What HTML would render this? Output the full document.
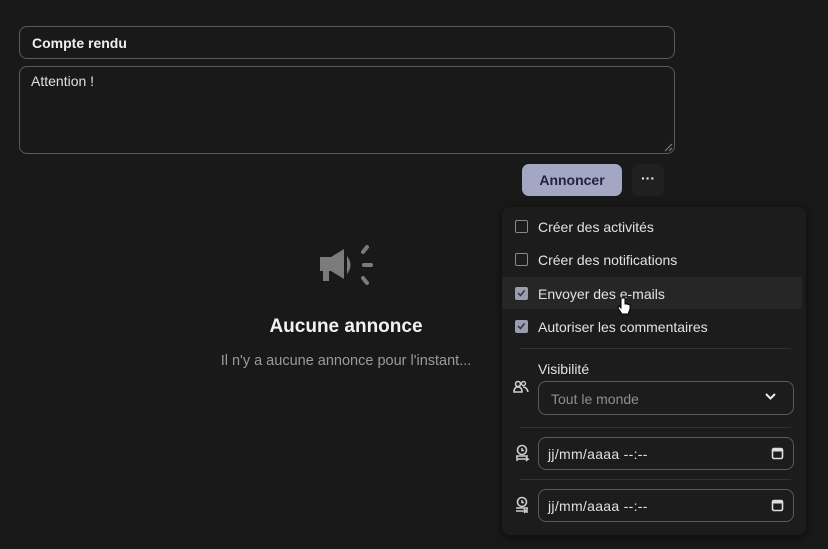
<!DOCTYPE html>
<html><head><style>
body{margin:0;width:828px;height:549px;background:#191919;font-family:"Liberation Sans","DejaVu Sans",sans-serif;color:#e6e6e6;position:relative;overflow:hidden}
.a{position:absolute}
.inp{border:1.5px solid #5a5a5a;border-radius:8px;box-sizing:border-box}
.cb{position:absolute;left:515px;width:13px;height:13px;box-sizing:border-box;border:1.5px solid #8a8a8a;border-radius:2px}
.cb.on{background:#9a9cb0;border-color:#9a9cb0}
.lbl{position:absolute;left:538px;font-size:14px;color:#e2e2e2}
.sep{position:absolute;left:520px;width:271px;height:1px;background:#333}
</style></head><body>
<div class="a inp" style="left:19px;top:26px;width:656px;height:33px"></div>
<div class="a" style="left:32px;top:35px;font-size:14px;font-weight:bold;color:#f0f0f0">Compte rendu</div>
<div class="a inp" style="left:19px;top:66px;width:656px;height:88px"></div>
<div class="a" style="left:31px;top:73px;font-size:14px;color:#e0e0e0">Attention !</div>
<svg class="a" style="left:664px;top:143px" width="9" height="9"><path d="M1 8L8 1M5 8L8 5" stroke="#888" stroke-width="1"/></svg>
<div class="a" style="left:522px;top:164px;width:100px;height:32px;background:#a4a7c3;border-radius:7px;color:#22243a;font-weight:bold;font-size:14px;text-align:center;line-height:32px">Annoncer</div>
<div class="a" style="left:632px;top:164px;width:32px;height:32px;background:#202020;border-radius:7px;color:#eee;font-weight:bold;text-align:center;line-height:28px;font-size:14px">···</div>

<svg class="a" style="left:318px;top:243px" width="56" height="44" viewBox="0 0 56 44">
<path d="M2 14h11l13-8v30l-13-8h-2v10h-6V28H2z" fill="#7b7b7b"/>
<path d="M29 13q7 9 0 18z" fill="#7b7b7b"/>
<path d="M49 4l-4 5M53 22h-7M49 40l-4-5" stroke="#7b7b7b" stroke-width="4" stroke-linecap="round"/>
</svg>
<div class="a" style="left:196px;top:316px;width:300px;text-align:center;font-size:19px;font-weight:bold;color:#f2f2f2">Aucune annonce</div>
<div class="a" style="left:196px;top:353px;width:300px;text-align:center;font-size:14.5px;color:#9a9a9a">Il n'y a aucune annonce pour l'instant...</div>

<div class="a" style="left:502px;top:207px;width:304px;height:328px;background:#1c1c1c;border-radius:8px;box-shadow:0 2px 10px rgba(0,0,0,.6)"></div>
<div class="a" style="left:502px;top:277px;width:300px;height:32px;background:#262626"></div>
<div class="cb" style="top:220px"></div><div class="lbl" style="top:219px">Créer des activités</div>
<div class="cb" style="top:253px"></div><div class="lbl" style="top:252px">Créer des notifications</div>
<div class="cb on" style="top:287px"><svg width="10" height="10" style="position:absolute;left:0;top:0"><path d="M2 5l2.5 2.5L8.5 2.5" stroke="#333" stroke-width="1.5" fill="none"/></svg></div><div class="lbl" style="top:286px">Envoyer des e-mails</div>
<div class="cb on" style="top:320px"><svg width="10" height="10" style="position:absolute;left:0;top:0"><path d="M2 5l2.5 2.5L8.5 2.5" stroke="#333" stroke-width="1.5" fill="none"/></svg></div><div class="lbl" style="top:319px">Autoriser les commentaires</div>
<svg class="a" style="left:617px;top:296px" width="14" height="20"><path d="M4 2v10l-2-2-1 2 4 6h6l2-5v-4l-3-1-2 0V2z" fill="#fff" stroke="#000" stroke-width="1"/></svg>
<div class="sep" style="top:348px"></div>
<div class="lbl" style="top:361px">Visibilité</div>
<svg class="a" style="left:513px;top:380px" width="16" height="15"><circle cx="5" cy="4" r="2.5" stroke="#ccc" stroke-width="1.6" fill="none"/><circle cx="10.5" cy="3.5" r="2" stroke="#ccc" stroke-width="1.4" fill="none"/><path d="M1 12q0-5 4-5t4 5zM10 7q4 0 5 5" stroke="#ccc" stroke-width="1.6" fill="none"/></svg>
<div class="a inp" style="left:538px;top:381px;width:256px;height:34px"></div>
<div class="a" style="left:551px;top:391px;font-size:14px;color:#8e8e8e">Tout le monde</div>
<svg class="a" style="left:764px;top:392px" width="13" height="10"><path d="M2 2l4.5 4.5L11 2" stroke="#eee" stroke-width="2" fill="none"/></svg>
<div class="sep" style="top:427px"></div>
<div class="a inp" style="left:538px;top:437px;width:256px;height:33px"></div>
<div class="a" style="left:548px;top:446px;font-size:14px;color:#e0e0e0;letter-spacing:0.3px">jj/mm/aaaa --:--</div>
<div class="sep" style="top:479px"></div>
<div class="a inp" style="left:538px;top:489px;width:256px;height:33px"></div>
<div class="a" style="left:548px;top:498px;font-size:14px;color:#e0e0e0;letter-spacing:0.3px">jj/mm/aaaa --:--</div>
<svg class="a" style="left:771px;top:446px" width="13" height="14"><rect x="1.5" y="2.5" width="10" height="10" rx="1.5" stroke="#ddd" stroke-width="1.6" fill="none"/><rect x="1.5" y="2.5" width="10" height="3" fill="#ddd"/></svg>
<svg class="a" style="left:771px;top:498px" width="13" height="14"><rect x="1.5" y="2.5" width="10" height="10" rx="1.5" stroke="#ddd" stroke-width="1.6" fill="none"/><rect x="1.5" y="2.5" width="10" height="3" fill="#ddd"/></svg>
<svg class="a" style="left:514px;top:444px" width="16" height="20"><circle cx="8" cy="6" r="4.5" stroke="#ccc" stroke-width="1.6" fill="none"/><path d="M8 4v2.5h2M2 12h12M3 12v5M3 15h11l-2-2M12 17l2-2" stroke="#ccc" stroke-width="1.5" fill="none"/></svg>
<svg class="a" style="left:514px;top:496px" width="16" height="20"><circle cx="8" cy="6" r="4.5" stroke="#ccc" stroke-width="1.6" fill="none"/><path d="M8 4v2.5h2M2 12h12M2 15h11M13 12v5M10 13l2 2-2 2" stroke="#ccc" stroke-width="1.5" fill="none"/></svg>
</body></html>
